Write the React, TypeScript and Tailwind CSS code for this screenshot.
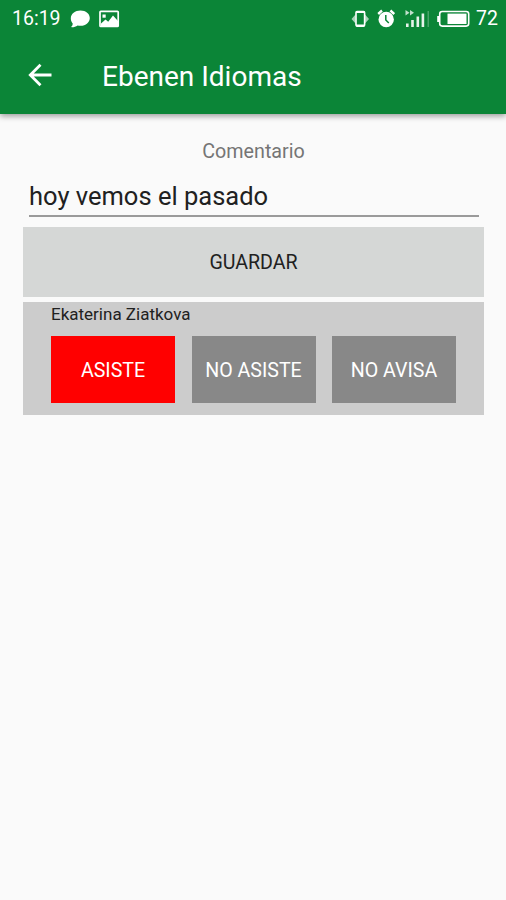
import React, { useState } from 'react';

const StatusBar = () => (
  <div className="flex h-[38px] items-center justify-between pl-3 pr-2 text-white">
    <div className="flex items-center">
      <span className="w-[58px] whitespace-nowrap text-[19.5px] leading-[38px]">16:19</span>
      <svg width="21" height="18" viewBox="0 0 21 18" fill="currentColor">
        <path d="M10.500 .5c5.400 0 9.300 3.200 9.300 7.500s-3.900 7.800-9.300 7.800c-1 0-2-.1-2.900-.4C5.800 16.700 3.500 17.300.8 17.100c1.200-.9 1.900-2 1.900-3.700C1.400 12 .8 10.200.8 8.200.8 3.800 5.100.5 10.500.5z" />
      </svg>
      <svg className="ml-2" width="21" height="18" viewBox="0 0 21 18" fill="none">
        <rect x="1" y="1.300" width="18.200" height="15.200" rx="0.800" stroke="currentColor" strokeWidth="1.700" />
        <path d="M2 16v-2.500l4.500-4 2.700 2.300L14 5.500l5 5.500v5z" fill="currentColor" />
        <path d="M3.500 4.500h3.200v3.200H3.500z" fill="currentColor" />
      </svg>
    </div>
    <div className="flex items-center">
      <svg width="18" height="20" viewBox="0 0 18 20" fill="none">
        <path d="M4.500 5.500L.5 10l4 4.500zM14 5.500l4 4.500-4 4.500z" fill="currentColor" opacity="0.65" />
        <rect x="5" y="2.500" width="8.600" height="14.600" rx="1" stroke="currentColor" strokeWidth="1.600" />
        <path d="M5 3h8.600M5 16.500h8.600" stroke="currentColor" strokeWidth="2" />
      </svg>
      <svg className="ml-2" width="18" height="20" viewBox="0 0 18 20">
        <circle cx="9.200" cy="10.500" r="7.700" fill="currentColor" />
        <path d="M1.200 5L5 1.500M17.200 5l-3.800-3.500" stroke="currentColor" strokeWidth="2.400" />
        <path d="M8.800 6v5l3 3" stroke="#0b8537" strokeWidth="1.500" fill="none" />
      </svg>
      <svg className="ml-2.5" width="25" height="20" viewBox="0 0 25 20" fill="currentColor">
        <path d="M.5 1l4 2.700-4 2.700zM5 1l4 2.700-4 2.700z" opacity="0.75" />
        <path d="M1 14.500h2.600V18H1zM6.200 11h2.600v7H6.200zM11.500 7.500h2.600V18h-2.600zM16.600 4.500h2.600V18h-2.600z" opacity="0.9" />
        <path d="M22.500 2H24v16h-1.500z" opacity="0.25" />
      </svg>
      <svg className="ml-[7px]" width="33" height="18" viewBox="0 0 33 18" fill="none">
        <rect x="2.700" y="1.500" width="29" height="14.600" rx="2.500" stroke="currentColor" strokeWidth="1.600" />
        <path d="M1.200 6v6" stroke="currentColor" strokeWidth="2" />
        <rect x="10.500" y="3.600" width="19" height="10.400" fill="currentColor" />
      </svg>
      <span className="ml-1.5 text-[19.5px] leading-[38px]">72</span>
    </div>
  </div>
);

const App = () => {
  const [comment, setComment] = useState('hoy vemos el pasado');
  const [selected, setSelected] = useState('ASISTE');

  const options = ['ASISTE', 'NO ASISTE', 'NO AVISA'];

  return (
    <div className="h-[900px] w-[506px] overflow-hidden bg-[#fafafa] font-[Roboto,sans-serif]">
      <header className="h-[114px] bg-[#0b8537] shadow-[0_2px_6px_rgba(0,0,0,0.4)]">
        <StatusBar />
        <div className="flex h-[76px] items-center pl-7 text-white">
          <button aria-label="Volver" className="pb-0.5">
            <svg width="24" height="24" viewBox="0 0 24 24" fill="none" stroke="currentColor" strokeWidth="2.800">
              <path d="M23.500 12H2.500M12.500 1.800L2.300 12l10.200 10.200" />
            </svg>
          </button>
          <h1 className="ml-[50px] pt-px text-[28px]">Ebenen Idiomas</h1>
        </div>
      </header>

      <main className="pl-[23px] pr-[22px] pt-6">
        <p className="text-center text-[19.7px] leading-7 text-[#757575]">Comentario</p>
        <input
          type="text"
          value={comment}
          onChange={(e) => setComment(e.target.value)}
          className="mx-1.5 mt-2 block h-[43px] w-[450px] border-b-2 border-[#9a9a9a] pt-[3px] text-[25.5px] text-[#212121] outline-none"
        />
        <button className="mt-2.5 block h-[70px] w-full bg-[#d5d7d6] pt-0.5 text-[19.6px] text-[#212121]">
          GUARDAR
        </button>

        {/* Alumno */}
        <div className="mt-[5px] h-[113px] bg-[#ccc] pl-7">
          <p className="h-[34px] text-[17px] leading-[25px] text-[#212121]">Ekaterina Ziatkova</p>
          <div className="flex gap-[16.5px]">
            {options.map((option) => (
              <button
                key={option}
                onClick={() => setSelected(option)}
                className={`h-[67px] w-[124px] whitespace-nowrap pt-[3px] text-[19.6px] text-white ${
                  selected === option ? 'bg-[#ff0000]' : 'bg-[#888]'
                }`}
              >
                {option}
              </button>
            ))}
          </div>
        </div>
      </main>
    </div>
  );
};

export default App;
